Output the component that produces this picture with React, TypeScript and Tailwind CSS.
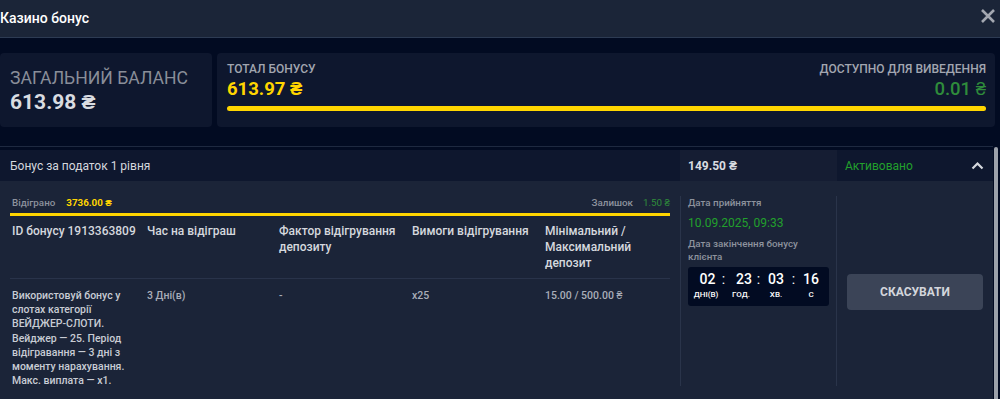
import React from "react";

const Hryvnia = () => <span>₴</span>;

export default function App() {
  return (
    <div className="w-[1000px] h-[399px] overflow-hidden bg-[#020b22] font-['Roboto',sans-serif] text-[#d5d8de]">
      {/* header */}
      <div className="h-[38px] bg-[#1b2538] border-b border-[#2d3b53] flex items-center justify-between pb-[2px]">
        <div className="text-[14px] font-medium text-white leading-none">Казино бонус</div>
        <svg width="16" height="16" viewBox="0 0 16 16" className="mr-[4px] mb-[4px]">
          <path d="M2 2 L14 14 M14 2 L2 14" stroke="#a3a7b0" strokeWidth="2.6" strokeLinecap="butt" />
        </svg>
      </div>

      {/* balance cards */}
      <div className="mt-[15px] flex gap-[5px] pr-[5px] h-[74px]">
        <div className="w-[212px] bg-[#0e172e] rounded-[4px] pl-[10px] pt-[14px]">
          <div className="text-[17.6px] leading-[22px] text-[#898e99]">ЗАГАЛЬНИЙ БАЛАНС</div>
          <div className="text-[21px] leading-[24px] font-bold text-[#d9dce1] mt-[1px]">
            613.98 <Hryvnia />
          </div>
        </div>
        <div className="flex-1 bg-[#0e172e] rounded-[4px] pl-[10px] pr-[9px] pt-[8px]">
          <div className="flex justify-between">
            <div>
              <div className="text-[12px] leading-[16px] font-medium text-[#a2a6b0]">ТОТАЛ БОНУСУ</div>
              <div className="text-[18.5px] leading-[22px] font-bold text-[#ffd500] mt-[1px]">
                613.97 <Hryvnia />
              </div>
            </div>
            <div className="text-right">
              <div className="text-[12px] leading-[16px] font-medium text-[#a2a6b0]">ДОСТУПНО ДЛЯ ВИВЕДЕННЯ</div>
              <div className="text-[18.5px] leading-[22px] font-medium text-[#2f8c3b] mt-[1px]">
                0.01 <Hryvnia />
              </div>
            </div>
          </div>
          <div className="mt-[6px] h-[5px] rounded-full bg-[#ffd500]" />
        </div>
      </div>

      {/* accordion */}
      <div className="mt-[19px] flex">
        <div className="w-[993px] border-t border-[#1e2940]">
          <div className="h-[3px]" />
          <div className="h-[31px] bg-[#0e172e] flex items-center text-[12px]">
            <div className="flex-1 pl-[10px] text-[#d5d8de]">Бонус за податок 1 рівня</div>
            <div className="w-[157px] h-full bg-[#151d33] flex items-center pl-[8px] font-bold text-[#d9dce1]">
              149.50 <span className="ml-[3px]">₴</span>
            </div>
            <div className="w-[156px] h-full flex items-center justify-between pl-[8px] pr-[9px]">
              <span className="text-[#22a02c]">Активовано</span>
              <svg width="13" height="9" viewBox="0 0 13 9">
                <path d="M1.5 7.5 L6.5 2.5 L11.5 7.5" stroke="#d5d8de" strokeWidth="2.2" fill="none" />
              </svg>
            </div>
          </div>

          <div className="bg-[#1b2438] h-[218px] flex">
            {/* left part */}
            <div className="w-[680px] pl-[10px] pr-[10px]">
              <div className="pt-[16px] h-[28px] flex items-center justify-between text-[9.8px] leading-[12px]">
                <div className="flex items-center pl-[2px]">
                  <span className="text-[#8d929d] font-medium">Відіграно</span>
                  <span className="ml-[11px] font-bold text-[#ffd500]">3736.00 ₴</span>
                </div>
                <div className="flex items-center">
                  <span className="text-[#8d929d] font-medium">Залишок</span>
                  <span className="ml-[10px] text-[#2f8c3b]">1.50 ₴</span>
                </div>
              </div>
              <div className="mt-[4px] h-[3px] bg-[#ffd500]" />

              <div className="mt-[7px] grid grid-cols-[135px_132px_133px_133px_1fr] pl-[2px] border-b border-[#29334a] pb-[7px] text-[12px] leading-[16px] font-medium text-[#d5d8de]">
                <div>ID бонусу 1913363809</div>
                <div>Час на відіграш</div>
                <div className="pr-[4px]">Фактор відігрування депозиту</div>
                <div>Вимоги відігрування</div>
                <div className="w-[100px]">Мінімальний / Максимальний депозит</div>
              </div>

              <div className="pt-[10px] grid grid-cols-[135px_132px_133px_133px_1fr] pl-[2px] text-[10.5px] leading-[14.2px] font-medium text-[#c8ccd4]">
                <div className="pr-[6px]">
                  Використовуй бонус у слотах категорії ВЕЙДЖЕР-СЛОТИ. Вейджер — 25. Період відігравання — 3 дні з моменту нарахування. Макс. виплата — x1.
                </div>
                <div className="text-[#a9aeb8]">3 Дні(в)</div>
                <div className="text-[#a9aeb8]">-</div>
                <div className="text-[#a9aeb8]">x25</div>
                <div className="text-[#a9aeb8]">15.00 / 500.00 ₴</div>
              </div>
            </div>

            {/* dates column */}
            <div className="w-[156px] mt-[15px] h-[190px] border-l border-[#2a344a] pl-[7px]">
              <div className="pt-[1px] text-[9.8px] leading-[12px] font-medium text-[#8d929d]">Дата прийняття</div>
              <div className="mt-[6px] text-[12px] leading-[16px] text-[#22a02c]">10.09.2025, 09:33</div>
              <div className="mt-[6px] text-[9.8px] leading-[13px] font-medium text-[#8d929d] w-[135px]">
                Дата закінчення бонусу клієнта
              </div>
              <div className="mt-[4px] w-[141px] h-[39px] bg-[#020b22] rounded-[3px] px-[4px] pt-[4px] text-white">
                <div className="flex text-[14px] leading-[17px] font-medium">
                  <span className="w-[28px] text-center pl-[3px]">02</span>
                  <span className="w-[7px] text-center font-normal">:</span>
                  <span className="w-[28px] text-center pl-[6px]">23</span>
                  <span className="w-[7px] text-center font-normal">:</span>
                  <span className="w-[28px] text-center">03</span>
                  <span className="w-[7px] text-center font-normal">:</span>
                  <span className="w-[28px] text-center">16</span>
                </div>
                <div className="flex text-[8px] leading-[12px] font-medium mt-[1px]">
                  <span className="w-[28px] text-center">ДНІ(В)</span>
                  <span className="w-[7px]" />
                  <span className="w-[28px] text-center">ГОД.</span>
                  <span className="w-[7px]" />
                  <span className="w-[28px] text-center">ХВ.</span>
                  <span className="w-[7px]" />
                  <span className="w-[28px] text-center">С</span>
                </div>
              </div>
            </div>

            {/* button column */}
            <div className="flex-1 mt-[15px] h-[190px] border-l border-[#2a344a] pl-[10px] pt-[78px]">
              <div className="w-[136px] h-[36px] rounded-[4px] bg-[#3b4457] flex items-center justify-center text-[12px] font-bold text-[#d3d6dc]">
                СКАСУВАТИ
              </div>
            </div>
          </div>
        </div>
        <div className="ml-[1px] w-[4px] mt-[1px] h-[260px] bg-[#9ca1aa] rounded-[2px]" />
      </div>
    </div>
  );
}
